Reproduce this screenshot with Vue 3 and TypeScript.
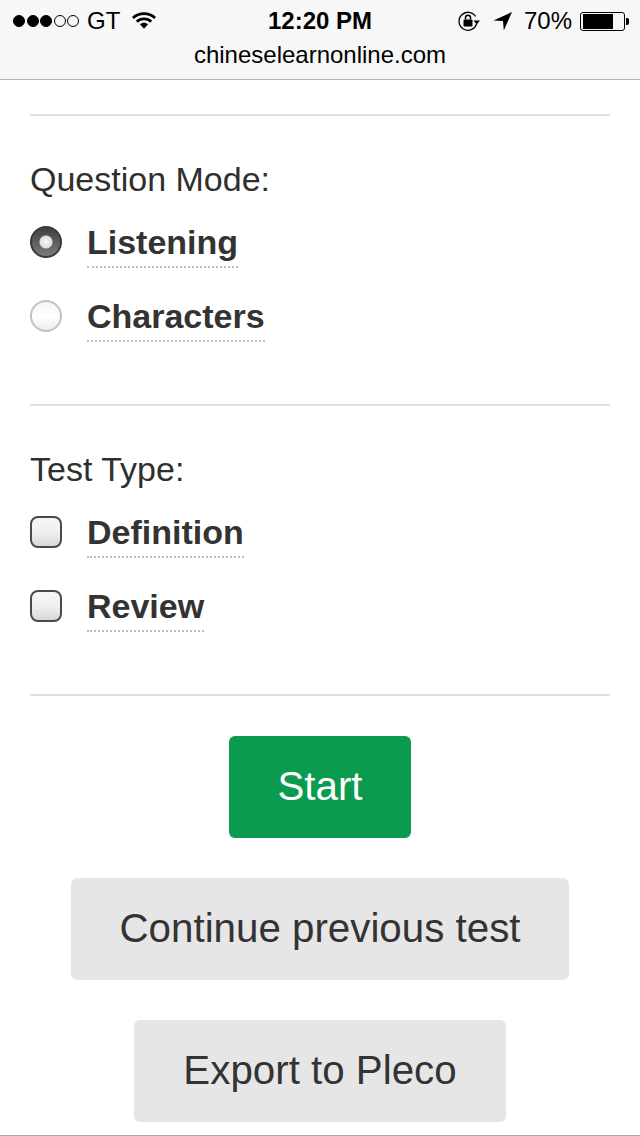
<script setup lang="ts">
interface Option { label: string; checked?: boolean }
const modes: Option[] = [{ label: 'Listening', checked: true }, { label: 'Characters' }]
const types: Option[] = [{ label: 'Definition' }, { label: 'Review' }]
</script>

<template>
  <div class="page">
    <header class="chrome">
      <div class="status">
        <div class="left">
          <span class="dots"><i class="on"></i><i class="on"></i><i class="on"></i><i></i><i></i></span>
          <span class="carrier">GT</span>
          <svg class="wifi" width="24" height="19" viewBox="0 0 26 20">
            <path d="M1 7.2C7.6 1 18.4 1 25 7.2" fill="none" stroke="#000" stroke-width="3"/>
            <path d="M5.2 11.2C9.6 7.2 16.4 7.2 20.8 11.2" fill="none" stroke="#000" stroke-width="3"/>
            <path d="M8.8 14.2L13 19L17.2 14.2C14.8 12 11.2 12 8.8 14.2Z" fill="#000"/>
          </svg>
        </div>
        <span class="time">12:20 PM</span>
        <div class="right">
          <svg class="lock" width="24" height="22" viewBox="0 0 24 22">
            <path d="M18.6 6.4A9 9 0 1 0 19.6 14" fill="none" stroke="#000" stroke-width="1.3"/>
            <path d="M16.5 10.5L23 10.5L19.7 14.5Z" fill="#000"/>
            <rect x="6.5" y="9.5" width="9" height="7" rx="1" fill="#000"/>
            <path d="M8.5 9.5V7.8a2.5 2.5 0 0 1 5 0V9.5" fill="none" stroke="#000" stroke-width="1.5"/>
          </svg>
          <svg class="arrow" width="20" height="20" viewBox="0 0 20 20">
            <path d="M19 1L0.5 9.5L10 10L10.8 19.5Z" fill="#000"/>
          </svg>
          <span class="pct">70%</span>
          <span class="battery"><span class="level"></span></span>
          <span class="nub"></span>
        </div>
      </div>
      <div class="url">chineselearnonline.com</div>
    </header>

    <main class="content">
      <section class="group">
        <div class="heading">Question Mode:</div>
        <label v-for="m in modes" :key="m.label" class="row">
          <span class="radio" :class="{ checked: m.checked }"></span>
          <span class="text">{{ m.label }}</span>
        </label>
      </section>
      <section class="group">
        <div class="heading">Test Type:</div>
        <label v-for="t in types" :key="t.label" class="row">
          <span class="check"></span>
          <span class="text">{{ t.label }}</span>
        </label>
      </section>
      <div class="actions">
        <button class="btn start">Start</button>
        <button class="btn">Continue previous test</button>
        <button class="btn">Export to Pleco</button>
      </div>
    </main>
    <div class="bottom"></div>
  </div>
</template>

<style>
html, body { margin: 0; background: #fff; }
</style>

<style scoped>
.page {
  width: 640px;
  height: 1136px;
  overflow: hidden;
  display: flex;
  flex-direction: column;
  font-family: "Liberation Sans", Arial, sans-serif;
  color: #333;
  background: #fff;
}
.chrome {
  height: 79px;
  flex: none;
  box-sizing: content-box;
  background: #f7f7f7;
  border-bottom: 1px solid #b4b4b4;
  color: #000;
}
.status {
  height: 42px;
  position: relative;
  display: flex;
  align-items: center;
  justify-content: space-between;
  padding: 0 11px 0 13px;
}
.left, .right { display: flex; align-items: center; }
.dots { display: flex; gap: 1.5px; }
.dots i {
  width: 10px;
  height: 10px;
  border: 1px solid #000;
  border-radius: 50%;
  box-sizing: content-box;
}
.dots i.on { background: #000; }
.carrier { font-size: 24px; margin-left: 8px; }
.wifi { margin-left: 12px; margin-top: -2px; }
.time {
  position: absolute;
  left: 0;
  right: 0;
  text-align: center;
  font-size: 24px;
  font-weight: 700;
}
.lock { margin-right: 12px; }
.arrow { margin-right: 11px; }
.pct { font-size: 24px; margin-right: 8px; }
.battery {
  width: 45px;
  height: 19px;
  box-sizing: border-box;
  border: 1px solid #000;
  border-radius: 3px;
  padding: 1px 2px;
  display: block;
}
.level { display: block; width: 30px; height: 15px; background: #000; }
.nub { width: 3px; height: 7px; background: #000; margin-left: 1px; border-radius: 0 2px 2px 0; }
.url {
  text-align: center;
  font-size: 24px;
  line-height: 28px;
  margin-top: -1px;
}
.content {
  flex: 1;
  padding: 34px 30px 0;
}
.group {
  border-top: 2px solid #e0e0e0;
  height: 288px;
}
.heading {
  font-size: 34px;
  line-height: 38px;
  padding-top: 44px;
  margin-bottom: 24px;
  color: #2f2f2f;
}
.row {
  display: flex;
  align-items: flex-start;
  height: 74px;
}
.radio, .check {
  width: 32px;
  height: 32px;
  box-sizing: border-box;
  margin-top: 4px;
  margin-right: 25px;
  flex: none;
}
.radio {
  border-radius: 50%;
  border: 2px solid #c2c2c2;
  background: linear-gradient(#f4f4f4, #ffffff 50%, #ececec);
}
.radio.checked {
  border-color: #3a3a3a;
  background:
    radial-gradient(circle at 50% 50%, #f8f8f8 0, #dcdcdc 6px, rgba(0,0,0,0) 7px),
    linear-gradient(#3f3f3f, #7c7c7c);
}
.check {
  border-radius: 8px;
  border: 2px solid #4a4a4a;
  background: linear-gradient(#f6f6f6, #f0f0f0 50%, #d8d8d8);
}
.text {
  font-size: 34px;
  font-weight: 700;
  line-height: 40px;
  height: 44px;
  color: #333;
  border-bottom: 2px dotted #bdbdbd;
}
.actions {
  border-top: 2px solid #e0e0e0;
  display: flex;
  flex-direction: column;
  align-items: center;
  gap: 40px;
  padding-top: 40px;
}
.btn {
  height: 102px;
  padding: 0 49px;
  border: none;
  border-radius: 6px;
  background: #e6e6e6;
  color: #333;
  font-family: inherit;
  font-size: 40.3px;
}
.btn.start { background: #0a9b4f; color: #fff; padding: 0 48px; }
.bottom { height: 1px; background: #a8a8a8; flex: none; }
</style>
